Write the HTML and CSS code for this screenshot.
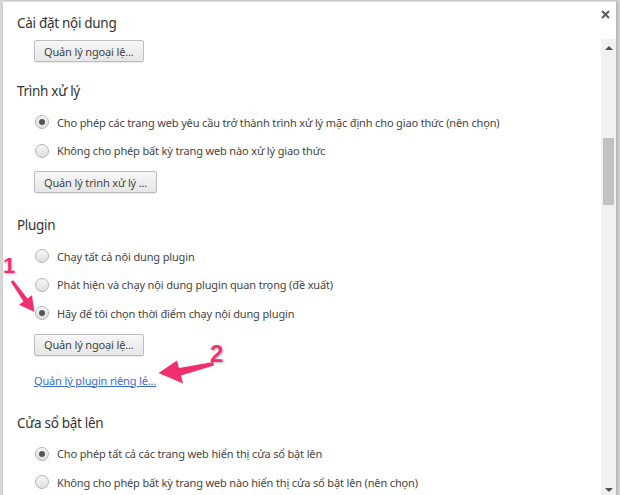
FILE: index.html
```html
<!DOCTYPE html>
<html lang="vi">
<head>
<meta charset="utf-8">
<link rel="stylesheet" href="styles.css">
</head>
<body>
<div class="dialog">
  <div class="titlebar">
    <h1 class="title">Cài đặt nội dung</h1>
    <svg class="close" width="9" height="9" viewBox="0 0 9 9"><path d="M1 1 L8 8 M8 1 L1 8" stroke="#5a5a5a" stroke-width="2"/></svg>
  </div>
  <div class="body">
    <div class="content">
      <div class="section first">
        <button class="btn">Quản lý ngoại lệ...</button>
      </div>
      <div class="section">
        <h2 class="heading">Trình xử lý</h2>
        <label class="radio"><span class="dot checked"></span>Cho phép các trang web yêu cầu trở thành trình xử lý mặc định cho giao thức (nên chọn)</label>
        <label class="radio"><span class="dot"></span>Không cho phép bất kỳ trang web nào xử lý giao thức</label>
        <button class="btn">Quản lý trình xử lý ...</button>
      </div>
      <div class="section with-link">
        <h2 class="heading">Plugin</h2>
        <label class="radio"><span class="dot"></span>Chạy tất cả nội dung plugin</label>
        <label class="radio"><span class="dot"></span>Phát hiện và chạy nội dung plugin quan trọng (đề xuất)</label>
        <label class="radio"><span class="dot checked"></span>Hãy để tôi chọn thời điểm chạy nội dung plugin</label>
        <button class="btn">Quản lý ngoại lệ...</button>
        <a class="link" href="#">Quản lý plugin riêng lẻ...</a>
      </div>
      <div class="section">
        <h2 class="heading">Cửa sổ bật lên</h2>
        <label class="radio"><span class="dot checked"></span>Cho phép tất cả các trang web hiển thị cửa sổ bật lên</label>
        <label class="radio"><span class="dot"></span>Không cho phép bất kỳ trang web nào hiển thị cửa sổ bật lên (nên chọn)</label>
      </div>
    </div>
    <div class="scrollbar">
      <span class="arrow up"></span>
      <span class="thumb"></span>
      <span class="arrow down"></span>
    </div>
  </div>
</div>
<div class="note n1">1</div>
<div class="note n2">2</div>
<svg class="pointers" width="620" height="495" viewBox="0 0 620 495">
  <g fill="#f0306e">
    <path d="M13.3 280.2 L27.5 298.5 L32 295.3 L34.5 312 L19 304.7 L23.5 301.5 L10.7 281.8 Z"/>
    <path d="M158.5 373 L177 360.5 L179 368 L213 362 L214 365.5 L181 375.5 L183 383.5 Z"/>
  </g>
</svg>
</body>
</html>
```

FILE: styles.css
```css
html, body {
  margin: 0;
  padding: 0;
  background: #d8d8d8;
}
body {
  position: relative;
  width: 620px;
  height: 495px;
  overflow: hidden;
  font-family: "Noto Sans", "Open Sans", sans-serif;
  color: #333;
}
.dialog {
  margin: 1px 4px 0 2px;
  height: 494px;
  background: #fff;
  border-left: 1px solid #cfcfcf;
  border-top: 1px solid #dcdcdc;
  box-shadow: 2px 0 3px rgba(0,0,0,0.18);
  overflow: hidden;
}
.titlebar {
  display: flex;
  justify-content: space-between;
  align-items: flex-start;
  height: 37px;
  padding: 0 6px 0 14px;
}
.title {
  margin: 11px 0 0;
  font-size: 13.5px;
  letter-spacing: -0.3px;
  font-weight: normal;
  color: #333;
  line-height: 20px;
}
.close {
  margin-top: 8px;
}
.body {
  display: flex;
  height: 457px;
}
.content {
  flex: 1;
  padding-left: 31px;
}
.section {
  display: flex;
  flex-direction: column;
  align-items: flex-start;
  padding-bottom: 18px;
}
.section.first {
  padding-top: 1px;
  padding-bottom: 15px;
}
.section.with-link {
  padding-bottom: 20px;
}
.heading {
  margin: 4px 0 7px -17px;
  font-size: 13.5px;
  letter-spacing: -0.3px;
  font-weight: normal;
  color: #333;
  line-height: 20px;
}
.radio {
  display: flex;
  align-items: center;
  height: 28.5px;
  font-size: 11px;
  letter-spacing: -0.15px;
  color: #444;
}
.dot {
  width: 12px;
  height: 12px;
  border: 1px solid #b4b4b4;
  border-radius: 50%;
  background: linear-gradient(#f6f6f6, #e0e0e0);
  margin: 0 8px 0 1px;
  display: flex;
  align-items: center;
  justify-content: center;
}
.dot.checked::after {
  content: "";
  width: 6px;
  height: 6px;
  border-radius: 50%;
  background: #555;
}
.btn {
  margin-top: 6px;
  height: 22px;
  padding: 0 9px;
  font: 11px "Noto Sans", "Open Sans", sans-serif;
  letter-spacing: -0.15px;
  color: #444;
  background: linear-gradient(#f7f7f7, #e6e6e6);
  border: 1px solid #bdbdbd;
  border-radius: 2px;
  box-shadow: 0 1px 0 rgba(0,0,0,0.08);
}
.section.first .btn { margin-top: 0; }
.link {
  margin-top: 16px;
  font-size: 11px;
  letter-spacing: -0.15px;
  line-height: 17px;
  color: #3b6bc9;
  text-decoration: underline;
}
.scrollbar {
  width: 15px;
  background: #f1f1f1;
  display: flex;
  flex-direction: column;
  align-items: center;
}
.arrow {
  width: 0;
  height: 0;
  border-left: 4px solid transparent;
  border-right: 4px solid transparent;
}
.arrow.up {
  margin-top: 7px;
  border-bottom: 4px solid #505050;
}
.arrow.down {
  margin-top: auto;
  margin-bottom: 4px;
  border-top: 4px solid #505050;
}
.thumb {
  margin-top: 88px;
  width: 11px;
  height: 67px;
  background: #c1c1c1;
}
.note {
  position: absolute;
  font: bold 22px "Liberation Sans", Arial, sans-serif;
  color: #f0306e;
  text-shadow: 0 0 2px #fff, 1px 1px 2px rgba(0,0,0,0.35);
}
.n1 { left: 3px; top: 253px; }
.n2 { left: 210px; top: 340px; font-size: 24px; }
.pointers {
  position: absolute;
  left: 0;
  top: 0;
}
```
